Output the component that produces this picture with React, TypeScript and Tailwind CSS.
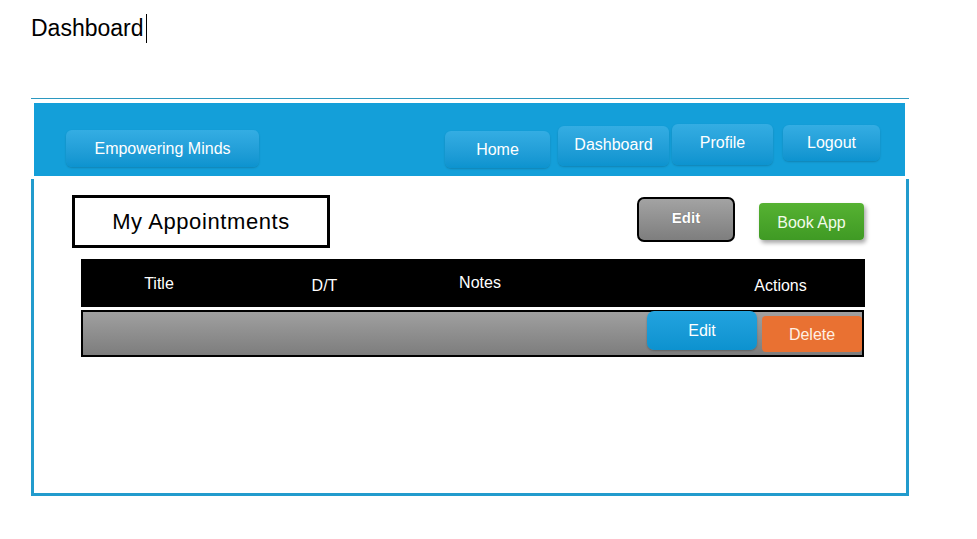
const navLinks = [
  { label: 'Home', className: 'ml-[186px] mt-[28px] w-[105px] h-[37px]' },
  { label: 'Dashboard', className: 'ml-[8px] mt-[23px] w-[111px] h-[40px] pb-[2px]' },
  { label: 'Profile', className: 'ml-[3px] mt-[21px] w-[101px] h-[41px] pb-[3px]' },
  { label: 'Logout', className: 'ml-[10px] mt-[22px] w-[97px] h-[36px]' },
]

const columns = [
  { label: 'Title', className: 'w-[156px] pt-[13px]' },
  { label: 'D/T', className: 'w-[175px] pt-[15px]' },
  { label: 'Notes', className: 'w-[136px] pt-[12px]' },
  { label: 'Actions', className: 'ml-[152px] w-[161px] pt-[15px]' },
]

function NavButton({ label, className }: { label: string; className: string }) {
  return (
    <button
      className={`flex items-center justify-center rounded-[6px] bg-linear-to-b from-[#34ade3] to-[#0c93cf] text-[16px] text-white shadow-[0_1px_2px_rgba(0,0,0,0.18)] ${className}`}
    >
      {label}
    </button>
  )
}

export default function App() {
  return (
    <div className="min-h-[539px] w-[977px] bg-white font-['Liberation_Sans',Arial,sans-serif] text-black">
      {/* page title with caret */}
      <div className="ml-[31px] pt-[14px] flex h-[43px] items-start">
        <span className="text-[23px] leading-[29px]">Dashboard</span>
        <span className="ml-[2px] h-[29px] w-px bg-black" />
      </div>

      <div className="ml-[31px] mt-[55px] h-px w-[878px] bg-[#2b98c0]" />

      {/* top bar */}
      <header className="ml-[34px] mt-[4px] flex h-[73px] w-[871px] items-start bg-[#149fd9]">
        <NavButton label="Empowering Minds" className="ml-[32px] mt-[27px] w-[193px] h-[37px]" />
        {navLinks.map((link) => (
          <NavButton key={link.label} label={link.label} className={link.className} />
        ))}
      </header>

      {/* content box */}
      <main className="ml-[31px] mt-[3px] h-[317px] w-[878px] border-x-[3px] border-b-[3px] border-[#229bcd]">
        <div className="flex items-start">
          <div className="ml-[38px] mt-[16px] flex h-[53px] w-[258px] items-center justify-center border-[3px] border-black text-[22px] tracking-[0.6px]">
            My Appointments
          </div>
          <button className="ml-[307px] mt-[18px] flex h-[45px] w-[98px] items-center justify-center rounded-[7px] border-2 border-black bg-linear-to-b from-[#a3a3a3] to-[#7e7e7e] pb-[2px] text-[15px] font-bold text-white [text-shadow:0_0_1px_#555]">
            Edit
          </button>
          <button className="ml-[24px] mt-[24px] flex h-[37px] w-[105px] items-center justify-center rounded-[4px] bg-linear-to-b from-[#56b232] to-[#3f9a24] pt-[2px] text-[16px] text-[#f2fbe9] shadow-[2px_3px_4px_rgba(0,0,0,0.35)]">
            Book App
          </button>
        </div>

        {/* table */}
        <div className="ml-[47px] mt-[11px] w-[784px]">
          <div className="flex h-[48px] items-start bg-black text-[16px] text-white">
            {columns.map((col) => (
              <div key={col.label} className={`text-center ${col.className}`}>
                {col.label}
              </div>
            ))}
          </div>
          <div className="mt-[3px] flex h-[47px] w-[783px] items-start border-2 border-black bg-linear-to-b from-[#a0a0a0] to-[#7d7d7d]">
            <button className="ml-[564px] -mt-[1px] flex h-[39px] w-[110px] items-center justify-center rounded-[7px] bg-linear-to-b from-[#22a3df] to-[#0c92cf] text-[16px] text-white shadow-[0_1px_2px_rgba(0,0,0,0.25)]">
              Edit
            </button>
            <button className="ml-[5px] mt-[4px] flex h-[36px] w-[100px] items-center justify-center rounded-[4px] bg-[#e97132] pt-[1px] text-[16px] text-[#fff0e4]">
              Delete
            </button>
          </div>
        </div>
      </main>
    </div>
  )
}
